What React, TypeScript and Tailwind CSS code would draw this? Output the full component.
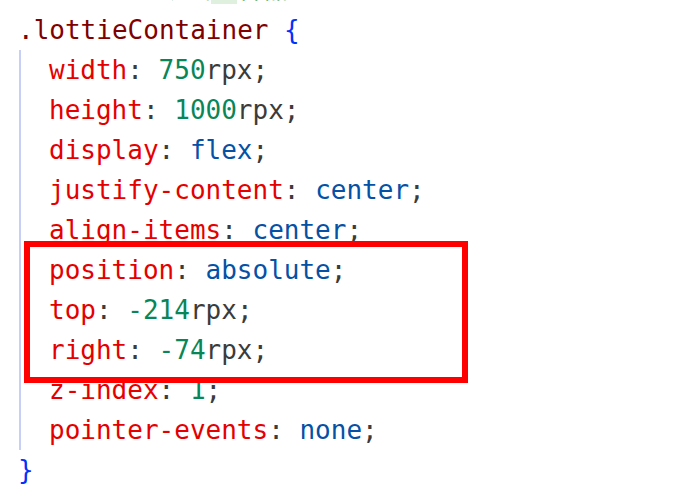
const C = {
  sel: 'text-[#800000]',
  prop: 'text-[#e50000]',
  num: 'text-[#098658]',
  val: 'text-[#0451a5]',
  punc: 'text-[#3b3b3b]',
  brace: 'text-[#0431fa]',
};

type Decl = { prop: string; value: string; unit?: string; kind: 'num' | 'val' };

const decls: Decl[] = [
  { prop: 'width', value: '750', unit: 'rpx', kind: 'num' },
  { prop: 'height', value: '1000', unit: 'rpx', kind: 'num' },
  { prop: 'display', value: 'flex', kind: 'val' },
  { prop: 'justify-content', value: 'center', kind: 'val' },
  { prop: 'align-items', value: 'center', kind: 'val' },
  { prop: 'position', value: 'absolute', kind: 'val' },
  { prop: 'top', value: '-214', unit: 'rpx', kind: 'num' },
  { prop: 'right', value: '-74', unit: 'rpx', kind: 'num' },
  { prop: 'z-index', value: '1', kind: 'num' },
  { prop: 'pointer-events', value: 'none', kind: 'val' },
];

// one css declaration line
const DeclLine = ({ d }: { d: Decl }) => (
  <div className="h-[40px] pl-[28px] whitespace-pre">
    <span className={C.prop}>{d.prop}</span>
    <span className={C.punc}>: </span>
    <span className={d.kind === 'num' ? C.num : C.val}>{d.value}</span>
    {d.unit && <span className={C.punc}>{d.unit}</span>}
    <span className={C.punc}>;</span>
  </div>
);

export default function App() {
  return (
    <div className="relative w-[698px] h-[492px] overflow-hidden bg-white">
      <div
        className="pt-[10px] pl-[18px] text-[26px] leading-[40px]"
        style={{ fontFamily: '"DejaVu Sans Mono", "Noto Sans CJK SC", monospace' }}
      >
        {/* comment line cut off at the top */}
        <div className="-mt-[41px] mb-[1px] h-[40px] whitespace-pre text-[#008000]">
          {'/* lottie动画'}
          <span className="bg-[#dff0df]">的</span>
          {'容器 */'}
        </div>

        <div className="h-[40px] whitespace-pre">
          <span className={C.sel}>.lottieContainer</span>
          <span className={C.brace}> {'{'}</span>
        </div>

        {/* body with indent guide */}
        <div className="ml-[1px] border-l-2 border-[#c7cff7]">
          {decls.map((d) => (
            <DeclLine key={d.prop} d={d} />
          ))}
        </div>

        <div className={`h-[40px] ${C.brace}`}>{'}'}</div>
      </div>

      {/* red highlight box drawn over the code */}
      <div className="absolute left-[24px] top-[241px] w-[444px] h-[142px] border-[6px] border-[#ff0000]" />
    </div>
  );
}
